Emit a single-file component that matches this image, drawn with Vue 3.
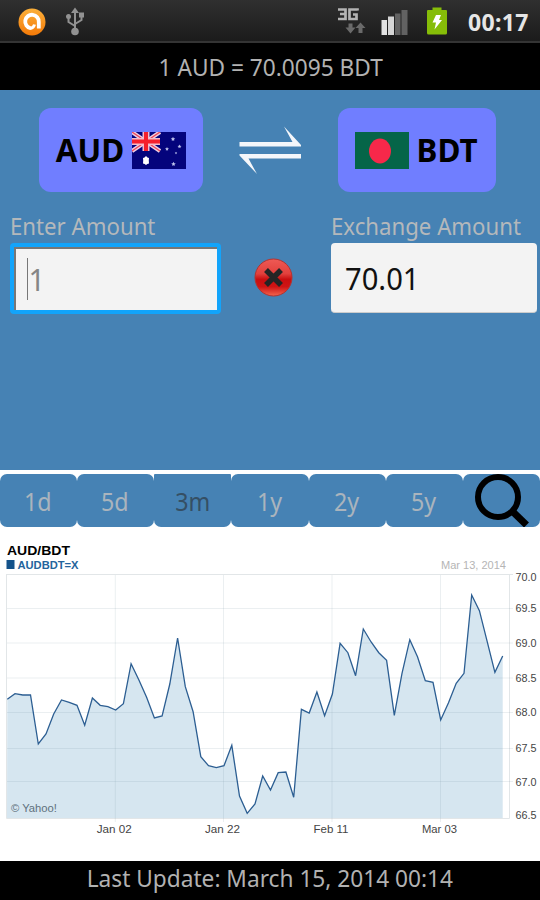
<template>
  <div class="screen">
    <header class="status-bar">
      <div class="status-left">
        <svg class="icon-app" viewBox="0 0 28 28">
          <defs>
            <linearGradient id="orange" x1="0" y1="0" x2="0" y2="1">
              <stop offset="0" stop-color="#fbb03a" />
              <stop offset="1" stop-color="#f47a08" />
            </linearGradient>
          </defs>
          <circle cx="14" cy="14" r="13.5" fill="url(#orange)" />
          <path d="M12.5 20.2A6.8 6.8 0 1 1 20.8 14V20.5" class="app-ring" />
          <path d="M12 20.5Q15.5 20.5 16.5 16.5" class="app-tail" />
        </svg>
        <svg class="icon-usb" viewBox="0 0 20 29">
          <path d="M10 4V24M10 19L3.5 15V10M10 17L16.5 13V8" />
          <path d="M6 6L10 0.5L14 6Z" class="solid" />
          <circle cx="10" cy="24.5" r="3.8" class="solid" />
          <circle cx="3.5" cy="9.5" r="2.5" class="solid" />
          <rect x="14" y="5.5" width="5" height="5" class="solid" />
        </svg>
      </div>
      <div class="status-right">
        <svg class="icon-3g" viewBox="0 0 29 28">
          <path d="M1 2.5H8.5V12H1M3 7H8.5" class="net" />
          <path d="M20.5 3.5V2.5H12.5V12H19.5V7.5H16" class="net" />
          <path d="M11.5 16.5H15.5V20.5H18.5L13.5 26.5L8.5 20.5H11.5Z" class="arrow" />
          <path d="M21.5 26V21H18.5L23.5 15.5L28.5 21H25.5V26Z" class="arrow" />
        </svg>
        <svg class="icon-signal" viewBox="0 0 27 25">
          <rect x="0.5" y="10" width="5.5" height="15" fill="#e2e2e2" />
          <rect x="7" y="6.5" width="6" height="18.5" fill="#d5d5d5" />
          <rect x="14" y="3.5" width="5.5" height="21.5" fill="#626262" />
          <rect x="20.5" y="0" width="6" height="25" fill="#626262" />
        </svg>
        <svg class="icon-battery" viewBox="0 0 20 28">
          <path d="M1 3H5.5V0.5H14.5V3H19Q20 3 20 4V26Q20 27.5 18.5 27.5H1.5Q0 27.5 0 26V4Q0 3 1 3Z" fill="#86bd08" />
          <path d="M9 8H14L12 13H15L7.5 22.5L9 15.5H5.5Z" fill="#fff" />
        </svg>
        <span class="clock">00:17</span>
      </div>
    </header>

    <div class="rate"><span>1 AUD = 70.0095 BDT</span></div>

    <main class="converter">
      <div class="currencies">
        <button class="currency from">
          <span>AUD</span>
          <svg class="flag" viewBox="0 0 54 37">
            <rect width="54" height="37" fill="#04047c" />
            <path d="M0 0L28 19M28 0L0 19" stroke="#f0cfe0" stroke-width="4" />
            <path d="M0 0L28 19M28 0L0 19" stroke="#ee4558" stroke-width="1.3" />
            <path d="M14 0V19M0 9.5H28" stroke="#f3bccb" stroke-width="7" />
            <path d="M14 0V19M0 9.5H28" stroke="#f5202c" stroke-width="4" />
            <path d="M14 24L15.5 25.5L17 26L16.8 28.5L17 31.5L15.3 32L14 33L12.700 32L11 31.5L11.2 28.5L11 26L12.5 25.5Z" class="star" />
            <path
              v-for="s in stars"
              :key="s.x"
              :transform="`translate(${s.x} ${s.y}) scale(${s.r})`"
              d="M0 -2.5L0.8 -0.8L2.5 -0.5L1 0.7L1.5 2.3L0 1.3L-1.5 2.3L-1 0.7L-2.5 -0.5L-0.8 -0.8Z"
              class="star small"
            />
          </svg>
        </button>
        <svg class="swap" viewBox="0 0 62 48">
          <path d="M0.5 16H53.500L45 0.5L62 19V20.5H0.5Z" />
          <path d="M62 28H0.5V29.500L18 48L9.500 32.5H62Z" />
        </svg>
        <button class="currency to">
          <svg class="flag" viewBox="0 0 54 37">
            <rect width="54" height="37" fill="#056548" />
            <ellipse cx="25" cy="19" rx="11" ry="12.5" fill="#f7284a" />
          </svg>
          <span>BDT</span>
        </button>
      </div>

      <div class="amounts">
        <div class="field">
          <label>Enter Amount</label>
          <div class="input focused"><i class="caret"></i><span>1</span></div>
        </div>
        <svg class="clear" viewBox="0 0 40 40">
          <defs>
            <linearGradient id="red" x1="0" y1="0" x2="0" y2="1">
              <stop offset="0" stop-color="#ee5a55" />
              <stop offset="0.4" stop-color="#e2403c" />
              <stop offset="0.55" stop-color="#c90e10" />
              <stop offset="0.75" stop-color="#cf1414" />
              <stop offset="1" stop-color="#f4664e" />
            </linearGradient>
          </defs>
          <circle cx="19.5" cy="19.5" r="18.5" fill="url(#red)" stroke="#b5322e" />
          <path d="M12 12L27 27M27 12L12 27" />
        </svg>
        <div class="field">
          <label>Exchange Amount</label>
          <div class="input result"><span>70.01</span></div>
        </div>
      </div>
    </main>

    <nav class="tabs">
      <button v-for="r in ranges" :key="r" class="tab" :class="{ active: r === '3m' }">
        <span>{{ r }}</span>
      </button>
      <button class="tab search">
        <svg viewBox="0 0 56 53">
          <circle cx="24" cy="23" r="20" />
          <path d="M37 36L52.5 51" class="handle" />
        </svg>
      </button>
    </nav>

    <svg class="chart" viewBox="0 527 540 334">
      <text x="7" y="555" class="title" textLength="63" lengthAdjust="spacingAndGlyphs">AUD/BDT</text>
      <rect x="6.5" y="560" width="8" height="9" fill="#14528a" />
      <text x="17.5" y="568.5" class="symbol" textLength="61" lengthAdjust="spacingAndGlyphs">AUDBDT=X</text>
      <text x="441" y="568.5" class="date" textLength="65" lengthAdjust="spacingAndGlyphs">Mar 13, 2014</text>

      <polygon :points="area" fill="#d6e6f0" />
      <g class="grid">
        <path d="M6.5 574.5H513M6.5 574V818.5H509.5V574" class="frame" />
        <line v-for="t in yTicks.slice(1, 7)" :key="t.label" x1="7" x2="513" :y1="t.y" :y2="t.y" />
        <line v-for="t in xTicks" :key="t.label" :x1="t.x" :x2="t.x" y1="575" y2="822" />
      </g>
      <polyline :points="line" class="series" />

      <text v-for="t in yTicks" :key="t.label" x="515.5" :y="t.text" class="tick" textLength="21" lengthAdjust="spacingAndGlyphs">{{ t.label }}</text>
      <text v-for="t in xTicks" :key="t.label" :x="t.x - 18.5" y="833" class="tick" textLength="35" lengthAdjust="spacingAndGlyphs">{{ t.label }}</text>
      <text x="11" y="812" class="tick credit" textLength="46" lengthAdjust="spacingAndGlyphs">© Yahoo!</text>
    </svg>

    <footer class="updated"><span>Last Update: March 15, 2014 00:14</span></footer>
  </div>
</template>

<script setup>
import { computed } from 'vue'

const ranges = ['1d', '5d', '3m', '1y', '2y', '5y']

const stars = [
  { x: 41, y: 7, r: 0.9 },
  { x: 35, y: 17, r: 0.8 },
  { x: 47.5, y: 14.5, r: 0.8 },
  { x: 44, y: 21, r: 0.5 },
  { x: 41.5, y: 32, r: 0.9 }
]

// daily closes as chart heights, one every `step` units
const start = 7.3
const step = 7.74
const closes = [
  699.3, 693.7, 695, 695, 744, 734, 714, 700, 702.3, 705.3, 725.3, 698, 705.3,
  706.7, 710, 703.7, 663.7, 680, 697.3, 718, 716, 684, 638, 686.7, 711.7, 756.7,
  765.7, 767.7, 765.7, 745.3, 796, 813.3, 804, 776, 790, 772.7, 772, 797.3,
  709.3, 713, 692, 715.7, 694, 643.3, 652.7, 675.7, 629, 642, 652.7, 660.3,
  715.3, 673.3, 639.7, 656.7, 680.7, 682.3, 720, 702.7, 683.3, 673.3, 595,
  610.7, 641.7, 672.3, 656
]

const yTicks = [
  { label: '70.0', y: 574.5, text: 580.5 },
  { label: '69.5', y: 608.5, text: 612 },
  { label: '69.0', y: 643, text: 647 },
  { label: '68.5', y: 678, text: 681.5 },
  { label: '68.0', y: 712.5, text: 716 },
  { label: '67.5', y: 748.5, text: 751.5 },
  { label: '67.0', y: 781.5, text: 786 },
  { label: '66.5', y: 818, text: 819 }
]

const xTicks = [
  { label: 'Jan 02', x: 115.3 },
  { label: 'Jan 22', x: 223.5 },
  { label: 'Feb 11', x: 332 },
  { label: 'Mar 03', x: 440.5 }
]

const line = computed(() => closes.map((y, i) => `${(start + i * step).toFixed(1)},${y}`).join(' '))
const area = computed(() => `7,818 ${line.value} 502.7,818`)
</script>

<style>
body {
  margin: 0;
  background: #000;
}
</style>

<style scoped>
.screen {
  width: 540px;
  height: 900px;
  display: flex;
  flex-direction: column;
  overflow: hidden;
  background: #fff;
  font-family: "Noto Sans", "Open Sans", sans-serif;
}

svg {
  display: block;
  flex: none;
}

button {
  border: 0;
  padding: 0;
  font-family: inherit;
}

.status-bar {
  box-sizing: border-box;
  height: 43px;
  padding: 0 11px 0 18px;
  display: flex;
  justify-content: space-between;
  background: linear-gradient(#303030, #1b1b1b);
  border-bottom: 2px solid #343434;
}

.status-left,
.status-right {
  display: flex;
  align-items: flex-start;
}

.icon-app {
  width: 28px;
  height: 28px;
  margin-top: 8px;
}

.app-ring {
  fill: none;
  stroke: #fff;
  stroke-width: 3.8;
}

.app-tail {
  fill: none;
  stroke: #fff;
  stroke-width: 3;
}

.icon-usb {
  width: 20px;
  height: 29px;
  margin: 7px 0 0 19px;
  fill: none;
  stroke: #929292;
  stroke-width: 2;
}

.solid {
  fill: #929292;
  stroke: none;
}

.icon-3g {
  width: 29px;
  height: 28px;
  margin-top: 7px;
}

.net {
  fill: none;
  stroke: #b4b4b4;
  stroke-width: 2.7;
}

.arrow {
  fill: #6a6a6a;
}

.icon-signal {
  width: 27px;
  height: 25px;
  margin: 10px 0 0 15px;
}

.icon-battery {
  width: 20px;
  height: 28px;
  margin: 7px 0 0 19px;
}

.clock {
  width: 61px;
  margin-left: 21px;
  line-height: 45px;
  font-size: 23px;
  font-weight: 700;
  color: #e6e6e6;
  white-space: nowrap;
  letter-spacing: 0.3px;
}

.rate,
.updated {
  display: flex;
  justify-content: center;
  background: #000;
  color: #b2b2b2;
  font-size: 24px;
  white-space: nowrap;
}

.rate {
  height: 47px;
  padding-left: 2px;
  line-height: 47px;
}

.rate span,
.updated span {
  transform: scaleX(0.945);
}

.converter {
  box-sizing: border-box;
  height: 380px;
  padding-top: 18px;
  background: #4682b4;
}

.currencies {
  display: flex;
  padding-left: 39px;
}

.currency {
  height: 84px;
  display: flex;
  align-items: center;
  justify-content: center;
  gap: 8px;
  border-radius: 12px;
  background: #707eff;
  color: #000;
  font-size: 33px;
  line-height: 44px;
  font-weight: 700;
}

.currency span {
  margin: 0 -2px 1px;
  transform: scaleX(0.95);
}

.from {
  width: 164px;
}

.to {
  box-sizing: border-box;
  width: 158px;
  padding-right: 2px;
}

.flag {
  width: 54px;
  height: 37px;
}

.star {
  fill: #fff;
}

.small {
  fill: #bfc4ee;
}

.swap {
  width: 62px;
  height: 48px;
  margin: 18px 37px 0 36px;
  fill: #f4f6fa;
}

.amounts {
  display: flex;
  align-items: flex-start;
  padding: 18px 3px 0 10px;
}

.field {
  display: flex;
  flex-direction: column;
}

.field:first-child {
  width: 211px;
}

.field:last-child {
  width: 206px;
}

label {
  height: 33px;
  line-height: 31px;
  color: #b4b8bb;
  font-size: 24px;
  white-space: nowrap;
  transform: scaleX(0.925);
  transform-origin: left;
}

.input {
  box-sizing: border-box;
  height: 70px;
  display: flex;
  align-items: center;
  border-radius: 4px;
  background: #f3f3f3;
  font-size: 31px;
  color: #111;
}

.focused {
  height: 71px;
  padding-left: 12px;
  border: 4px solid #12a4fb;
  box-shadow: inset 1px 1px 0 1px #777;
  color: #858585;
}

.focused span {
  transform: scaleX(0.94);
}

.result {
  padding-left: 14px;
  border-bottom: 1px solid #ccc;
}

.result span {
  transform: scaleX(0.94);
  transform-origin: left;
}

.caret {
  width: 1px;
  height: 42px;
  margin-left: 1px;
  background: #777;
}

.clear {
  width: 40px;
  height: 40px;
  margin: 48px 37px 0 33px;
}

.clear path {
  stroke: #252525;
  stroke-width: 5.5;
}

.tabs {
  height: 57px;
  box-sizing: border-box;
  padding: 4px 0 1px;
  display: grid;
  grid-template-columns: repeat(7, 1fr);
  background: #fff;
}

.tab {
  border-radius: 7px;
  background: #4682b4;
  color: #aab4bd;
  font-size: 25px;
  line-height: 52px;
}

.tab span {
  display: inline-block;
  margin-right: 1px;
  transform: scaleX(0.93);
}

.active {
  border-radius: 1px 1px 7px 7px;
  color: #354f64;
}

.search svg {
  width: 56px;
  height: 53px;
  margin-left: 11px;
  fill: none;
  stroke: #000;
  stroke-width: 6;
}

.search .handle {
  stroke-width: 7;
}

.chart {
  width: 540px;
  height: 334px;
  background: #fff;
  font-family: "Liberation Sans", Arial, sans-serif;
  font-size: 11px;
}

.title {
  font-size: 13px;
  font-weight: 700;
}

.symbol {
  font-weight: 700;
  fill: #24649c;
}

.date {
  fill: #b5b5b5;
}

.grid line {
  stroke: #6f8f9f;
  stroke-opacity: 0.14;
}

.frame {
  fill: none;
  stroke: #e2e6e8;
}

.series {
  fill: none;
  stroke: #2c5e92;
  stroke-width: 1.3;
}

.tick {
  fill: #444;
}

.credit {
  fill: #60717d;
}

.updated {
  height: 39px;
  line-height: 34px;
}
</style>
